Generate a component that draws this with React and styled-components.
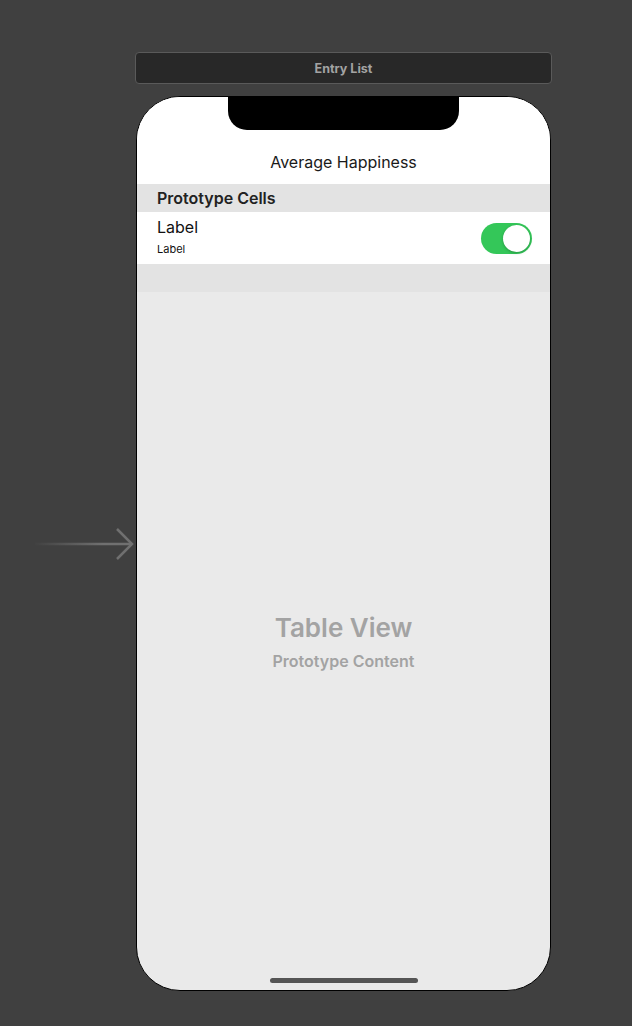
import React from 'react';
import styled, { createGlobalStyle } from 'styled-components';

const GlobalStyle = createGlobalStyle`
  html, body {
    margin: 0;
    padding: 0;
    background: #404040;
    font-family: Inter, "Noto Sans", "Liberation Sans", sans-serif;
  }
`;

const Canvas = styled.div`
  width: 632px;
  height: 1026px;
  display: flex;
  flex-direction: column;
  padding: 52px 0 0 135px;
  box-sizing: border-box;
`;

const SceneBar = styled.div`
  width: 417px;
  height: 32px;
  box-sizing: border-box;
  border: 1px solid #5a5a5a;
  border-radius: 4px;
  background: #282828;
  color: #a3a3a3;
  font-size: 12.5px;
  font-weight: 700;
  display: flex;
  align-items: center;
  justify-content: center;
  padding-top: 1px;
`;

const SceneWrap = styled.div`
  position: relative;
  margin: 12px 0 0 1px;
`;

const Phone = styled.div`
  position: relative;
  width: 415px;
  height: 895px;
  box-sizing: border-box;
  border: 1px solid #000;
  border-radius: 44px;
  background: #eaeaea;
  overflow: hidden;
  display: flex;
  flex-direction: column;
`;

const Notch = styled.div`
  position: absolute;
  top: 0;
  left: 91px;
  width: 231px;
  height: 33px;
  background: #000;
  border-radius: 0 0 19px 19px;
`;

const NavBar = styled.div`
  height: 87px;
  background: #fff;
  display: flex;
  align-items: flex-end;
  justify-content: center;
  padding-bottom: 12px;
  box-sizing: border-box;
  font-size: 16px;
  color: #1a1a1a;
`;

const SectionHeader = styled.div`
  height: ${p => p.$h}px;
  background: #e3e3e3;
  display: flex;
  align-items: center;
  padding-left: 20px;
  font-size: 16px;
  font-weight: 600;
  color: #222;
`;

const Cell = styled.div`
  height: 52px;
  background: #fff;
  display: flex;
  align-items: center;
  justify-content: space-between;
  padding: 0 18px 0 20px;
`;

const Labels = styled.div`
  display: flex;
  flex-direction: column;
  gap: 5px;
  margin-top: -4px;
`;

const Title = styled.div`
  font-size: 16px;
  color: #111;
  line-height: 20px;
`;

const Subtitle = styled.div`
  font-size: 11px;
  color: #111;
  line-height: 14px;
`;

const Switch = styled.div`
  width: 51px;
  height: 31px;
  border-radius: 16px;
  background: #34c759;
  position: relative;
`;

const Knob = styled.div`
  position: absolute;
  top: 2px;
  right: 2px;
  width: 27px;
  height: 27px;
  border-radius: 50%;
  background: #fff;
  box-shadow: 0 1px 3px rgba(0, 0, 0, 0.25);
`;

const Placeholder = styled.div`
  flex: 1;
  display: flex;
  flex-direction: column;
  align-items: center;
  justify-content: flex-end;
  padding-bottom: 318px;
  color: #a3a3a3;
  font-weight: 600;
`;

const BigText = styled.div`
  font-size: 26px;
  line-height: 32px;
`;

const SmallText = styled.div`
  font-size: 16px;
  line-height: 22px;
  margin-top: 6px;
`;

const HomeIndicator = styled.div`
  position: absolute;
  bottom: 7px;
  left: 133px;
  width: 148px;
  height: 5px;
  border-radius: 3px;
  background: #555;
`;

const EntryArrow = styled.svg`
  position: absolute;
  left: -103px;
  top: 428px;
`;

export default function App() {
  return (
    <>
      <GlobalStyle />
      <Canvas>
        <SceneBar>Entry List</SceneBar>
        <SceneWrap>
          <EntryArrow width="102" height="40" viewBox="0 0 102 40">
            <defs>
              <linearGradient id="fade" gradientUnits="userSpaceOnUse" x1="0" x2="70" y1="20" y2="20">
                <stop offset="0" stopColor="#707070" stopOpacity="0" />
                <stop offset="1" stopColor="#707070" stopOpacity="1" />
              </linearGradient>
            </defs>
            <path d="M2 20 H99" stroke="url(#fade)" strokeWidth="2.5" fill="none" />
            <path d="M84 5 L99 20 L84 35" stroke="#707070" strokeWidth="2.5" fill="none" />
          </EntryArrow>
          <Phone>
            <Notch />
            <NavBar>Average Happiness</NavBar>
            <SectionHeader $h={28}>Prototype Cells</SectionHeader>
            <Cell>
              <Labels>
                <Title>Label</Title>
                <Subtitle>Label</Subtitle>
              </Labels>
              <Switch>
                <Knob />
              </Switch>
            </Cell>
            <SectionHeader $h={28} />
            <Placeholder>
              <BigText>Table View</BigText>
              <SmallText>Prototype Content</SmallText>
            </Placeholder>
            <HomeIndicator />
          </Phone>
        </SceneWrap>
      </Canvas>
    </>
  );
}
